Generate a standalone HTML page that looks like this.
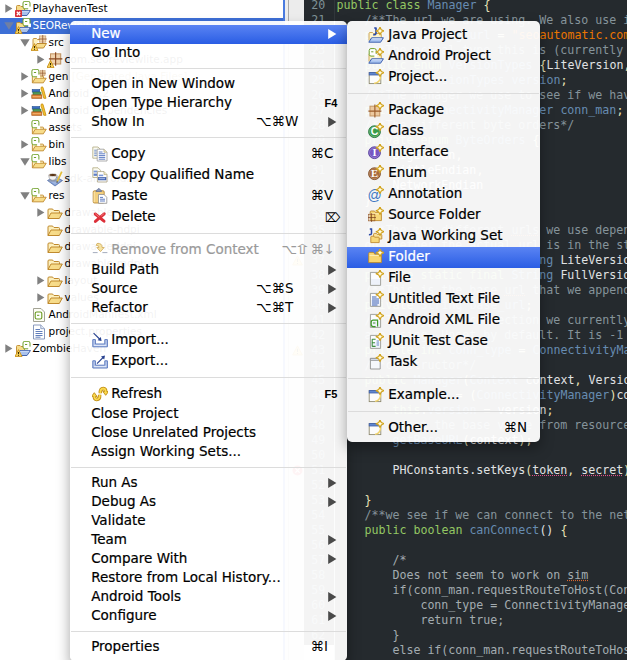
<!DOCTYPE html>
<html><head><meta charset="utf-8"><title>Eclipse context menu</title>
<style>
*{margin:0;padding:0;box-sizing:border-box}
html,body{width:627px;height:660px;overflow:hidden;background:#fff}
body{position:relative;font-family:"DejaVu Sans","Liberation Sans",sans-serif}
#tree{position:absolute;left:0;top:0;width:283px;height:660px;background:#fff;overflow:hidden;font-size:10.5px}
#tree .selrow{position:absolute;left:0;width:283px;height:16px;background:#3d6fd6}
#tree .tw{position:absolute}
#tree .ti{position:absolute;width:16px;height:16px}
#tree .ti svg,.mic svg{display:block}
#tree .tl{position:absolute;line-height:17px;height:17px;white-space:pre;color:#000}
#tree .tl.sel{color:#fff}
.deco{color:#9a8550}
#focus{position:absolute;left:283px;top:0;width:2px;height:660px;background:#4a7be0}
#sash{position:absolute;left:285px;top:0;width:19px;height:660px;background:#ececec}
#sash i{position:absolute;left:3px;top:0;width:1px;height:660px;background:#a9a9a9}
.mk{position:absolute}
#gutter{position:absolute;left:304px;top:0;width:30px;height:645px;background:#252a2e;overflow:hidden}
#gfill{position:absolute;left:304px;top:645px;width:30px;height:15px;background:#f4f4f4}
#gline{position:absolute;left:334px;top:0;width:1px;height:660px;background:#31373b}
#editor{position:absolute;left:335px;top:0;width:292px;height:660px;background:#252a2e;overflow:hidden}
.ln,.cl{position:absolute;font-family:"DejaVu Sans Mono","Liberation Mono",monospace;font-size:11.63px;line-height:15px;height:15px;white-space:pre}
.ln{left:304px;width:21.2px;text-align:right;color:#7e9196}
.cl{left:336.4px;color:#e0e2e4}
.k{color:#93c763}.c{color:#86949b}.m{color:#a3acb0}.t{color:#678cb1}.s{color:#ec7600}.d{color:#e0e2e4}.b{color:#e8e2b7}.f{color:#678cb1}
.sq{text-decoration:underline dotted #d9652e}
.sqr{text-decoration:underline dotted #e0508a}
.menu{position:absolute;background:rgba(255,255,255,0.95);overflow:hidden;font-size:13.5px;color:#000}
#main{left:70px;top:21px;width:277px;height:640px;border-radius:5px;box-shadow:0 8px 14px rgba(0,0,0,0.36)}
#sub{left:347px;top:21px;width:193px;height:421px;border-radius:5px;box-shadow:0 6px 14px rgba(0,0,0,0.35)}
.mi{position:absolute;left:0;right:0;white-space:pre}
.mi.sel{background:linear-gradient(#5a84f3,#2a5de4);color:#fff}
.mi.dis{color:#9a9a9a}
.mt{position:absolute;top:-1px;-webkit-text-stroke:0.2px currentColor}
.mic{position:absolute;left:22px;top:2px;width:16px;height:16px}
#sub .mic{left:21.3px}
.sc{position:absolute;top:-1px}
.sc.fk{font:bold 11px "Liberation Sans",sans-serif;line-height:inherit;top:0}
.sc.del{top:-0.5px;font-size:12.5px;transform:scaleX(0.86);transform-origin:0 50%}
.sc.wide{transform:scaleX(1.6);transform-origin:50% 50%}
.arr{position:absolute;left:258px}
.wl{position:absolute;left:264px;top:0;width:1px;height:660px;background:rgba(255,255,255,0.75)}
.sep{position:absolute;left:1px;right:1px;height:1px;background:#dcdcdc}
</style></head>
<body>
<div id="tree">
<svg class="tw" style="left:5px;top:4px" width="8" height="9" viewBox="0 0 8 9"><path d="M0.3 0.3 L7.4 4.5 L0.3 8.7 Z" fill="#808080"/></svg>
<span class="ti" style="left:15px;top:0.5px"><svg width="16" height="16" viewBox="0 0 16 16"><g transform="translate(0,0)"><path d="M1.5 13 V5.5 Q1.5 4.5 2.5 4.5 H5 L6 5.5 H9.5 V9" fill="#f7dc8a" stroke="#c08a2e" stroke-width="0.9"/><path d="M1.5 14.5 L5 9.5 H15.5 L12 14.5 Z" fill="#a9c1ec" stroke="#4464ad" stroke-width="1" stroke-linejoin="round"/><path d="M5.4 10.3 H14" stroke="#dbe6fa" stroke-width="0.8"/></g><rect x="8" y="0.3" width="7" height="7.5" rx="1.8" fill="#fff" stroke="#6fa02a" stroke-width="1"/><path d="M10 3.5 H12.2" stroke="#6fa02a" stroke-width="1"/><rect x="13.2" y="5.6" width="3" height="3.5" fill="#fff"/><rect x="0" y="9" width="7" height="7" rx="0.8" fill="#d9323a"/><path d="M1.8 10.8 L5.2 14.2 M5.2 10.8 L1.8 14.2" stroke="#fff" stroke-width="1.3"/></svg></span>
<span class="tl" style="left:32.5px;top:0px">PlayhavenTest</span>
<div class="selrow" style="top:18px"></div>
<svg class="tw" style="left:3.5px;top:21.5px" width="10" height="8" viewBox="0 0 10 8"><path d="M0.3 0.3 L9.7 0.3 L5 7.7 Z" fill="#6f7fa3"/></svg>
<span class="ti" style="left:15px;top:17.5px"><svg width="16" height="16" viewBox="0 0 16 16"><g transform="translate(0,0)"><path d="M1.5 13 V5.5 Q1.5 4.5 2.5 4.5 H5 L6 5.5 H9.5 V9" fill="#f7dc8a" stroke="#c08a2e" stroke-width="0.9"/><path d="M1.5 14.5 L5 9.5 H15.5 L12 14.5 Z" fill="#a9c1ec" stroke="#4464ad" stroke-width="1" stroke-linejoin="round"/><path d="M5.4 10.3 H14" stroke="#dbe6fa" stroke-width="0.8"/></g><rect x="8" y="0.3" width="7" height="7.5" rx="1.8" fill="#fff" stroke="#6fa02a" stroke-width="1"/><path d="M10 3.5 H12.2" stroke="#6fa02a" stroke-width="1"/><rect x="13.2" y="5.6" width="3" height="3.5" fill="#fff"/><path d="M3.5 8.6 L7 15.6 H0 Z" fill="#f9d45c" stroke="#c78f1a" stroke-width="0.9" stroke-linejoin="round"/><path d="M3.5 11.0 V13.2 M3.5 14.0 V14.8" stroke="#3a2a00" stroke-width="1.1"/></svg></span>
<span class="tl sel" style="left:32.5px;top:17px">SEOReviewLite</span>
<svg class="tw" style="left:19.5px;top:38.5px" width="10" height="8" viewBox="0 0 10 8"><path d="M0.3 0.3 L9.7 0.3 L5 7.7 Z" fill="#808080"/></svg>
<span class="ti" style="left:31px;top:34.5px"><svg width="16" height="16" viewBox="0 0 16 16"><path d="M2 12 V4.5 Q2 3.5 3 3.5 H5.5 L6.5 4.5 H9" fill="#fdf0bd" stroke="#c08a2e" stroke-width="0.9"/><path d="M3 13 L6 8.5 H15.5 L12.5 13 Z" fill="#f7dc8a" stroke="#c08a2e" stroke-width="1" stroke-linejoin="round"/><g transform="translate(8,0.3) scale(0.62)"><rect x="1" y="1" width="10" height="10" fill="#f0d3ae" stroke="#c39562" stroke-width="1"/><path d="M6 -0.6 V12.6 M-0.6 6 H12.6" stroke="#8a4a22" stroke-width="1.15"/></g><path d="M3.5 8.6 L7 15.6 H0 Z" fill="#f9d45c" stroke="#c78f1a" stroke-width="0.9" stroke-linejoin="round"/><path d="M3.5 11.0 V13.2 M3.5 14.0 V14.8" stroke="#3a2a00" stroke-width="1.1"/></svg></span>
<span class="tl" style="left:48.5px;top:34px">src</span>
<svg class="tw" style="left:37px;top:55px" width="8" height="9" viewBox="0 0 8 9"><path d="M0.3 0.3 L7.4 4.5 L0.3 8.7 Z" fill="#808080"/></svg>
<span class="ti" style="left:47px;top:51.5px"><svg width="16" height="16" viewBox="0 0 16 16"><g transform="translate(2.5,0.8) scale(1.02)"><rect x="1" y="1" width="10" height="10" fill="#f0d3ae" stroke="#c39562" stroke-width="1"/><path d="M6 -0.6 V12.6 M-0.6 6 H12.6" stroke="#8a4a22" stroke-width="1.15"/></g><path d="M3.5 8.6 L7 15.6 H0 Z" fill="#f9d45c" stroke="#c78f1a" stroke-width="0.9" stroke-linejoin="round"/><path d="M3.5 11.0 V13.2 M3.5 14.0 V14.8" stroke="#3a2a00" stroke-width="1.1"/></svg></span>
<span class="tl" style="left:64.5px;top:51px">com.seoreviewlite.app</span>
<svg class="tw" style="left:21px;top:72px" width="8" height="9" viewBox="0 0 8 9"><path d="M0.3 0.3 L7.4 4.5 L0.3 8.7 Z" fill="#808080"/></svg>
<span class="ti" style="left:31px;top:68.5px"><svg width="16" height="16" viewBox="0 0 16 16"><g transform="translate(0.4,2.5) scale(0.97,0.84)"><path d="M1 13.5 V5 Q1 4 2 4 H5 Q6 4 6.5 5 L7 5.5 H11.5 Q12.5 5.5 12.5 6.5 V8" fill="#fdf0bd" stroke="#c08a2e" stroke-width="1"/><path d="M1 13.5 L4 8 H15.3 L12.3 13.5 Z" fill="#f7dc8a" stroke="#c08a2e" stroke-width="1" stroke-linejoin="round"/></g><rect x="0.9" y="0.3" width="7" height="7.5" rx="1.8" fill="#fff" stroke="#6fa02a" stroke-width="1"/><path d="M2.9 3.5 H5.1000000000000005" stroke="#6fa02a" stroke-width="1"/><rect x="6.1000000000000005" y="5.6" width="3" height="3.5" fill="#fff"/><g transform="translate(8.6,1.2) scale(0.5)"><rect x="1" y="1" width="10" height="10" fill="#e8c9a0" stroke="#c39562" stroke-width="1"/><path d="M6 -0.6 V12.6 M-0.6 6 H12.6" stroke="#8a4a22" stroke-width="1.15"/></g></svg></span>
<span class="tl" style="left:48.5px;top:68px">gen <span class="deco">[Generated Java Files]</span></span>
<svg class="tw" style="left:21px;top:89px" width="8" height="9" viewBox="0 0 8 9"><path d="M0.3 0.3 L7.4 4.5 L0.3 8.7 Z" fill="#808080"/></svg>
<span class="ti" style="left:31px;top:85.5px"><svg width="16" height="16" viewBox="0 0 16 16"><rect x="1.2" y="3.5" width="7.5" height="2.6" fill="#3b6fc4" stroke="#27508f" stroke-width="0.6"/><rect x="2" y="6.1" width="8" height="2.8" fill="#4f9a5a" stroke="#2f6e3a" stroke-width="0.6"/><rect x="0.8" y="8.9" width="10" height="3.4" fill="#e0873a" stroke="#a8561a" stroke-width="0.7"/><path d="M1.5 10.6 H10" stroke="#f3b67a" stroke-width="0.8"/><path d="M10.2 1.2 Q11.8 0.2 12.2 2 L15 12.3 H12.8 L11.2 6 L10 3.2 Z" fill="#f5c531" stroke="#c58a0c" stroke-width="0.8" stroke-linejoin="round"/></svg></span>
<span class="tl" style="left:48.5px;top:85px">Android 2.2</span>
<svg class="tw" style="left:21px;top:106px" width="8" height="9" viewBox="0 0 8 9"><path d="M0.3 0.3 L7.4 4.5 L0.3 8.7 Z" fill="#808080"/></svg>
<span class="ti" style="left:31px;top:102.5px"><svg width="16" height="16" viewBox="0 0 16 16"><rect x="1.2" y="3.5" width="7.5" height="2.6" fill="#3b6fc4" stroke="#27508f" stroke-width="0.6"/><rect x="2" y="6.1" width="8" height="2.8" fill="#4f9a5a" stroke="#2f6e3a" stroke-width="0.6"/><rect x="0.8" y="8.9" width="10" height="3.4" fill="#e0873a" stroke="#a8561a" stroke-width="0.7"/><path d="M1.5 10.6 H10" stroke="#f3b67a" stroke-width="0.8"/><path d="M10.2 1.2 Q11.8 0.2 12.2 2 L15 12.3 H12.8 L11.2 6 L10 3.2 Z" fill="#f5c531" stroke="#c58a0c" stroke-width="0.8" stroke-linejoin="round"/></svg></span>
<span class="tl" style="left:48.5px;top:102px">Android Dependencies</span>

<span class="ti" style="left:31px;top:119.5px"><svg width="16" height="16" viewBox="0 0 16 16"><g transform="translate(0.4,2.5) scale(0.97,0.84)"><path d="M1 13.5 V5 Q1 4 2 4 H5 Q6 4 6.5 5 L7 5.5 H11.5 Q12.5 5.5 12.5 6.5 V8" fill="#fdf0bd" stroke="#c08a2e" stroke-width="1"/><path d="M1 13.5 L4 8 H15.3 L12.3 13.5 Z" fill="#f7dc8a" stroke="#c08a2e" stroke-width="1" stroke-linejoin="round"/></g><rect x="0.9" y="0.3" width="7" height="7.5" rx="1.8" fill="#fff" stroke="#6fa02a" stroke-width="1"/><path d="M2.9 3.5 H5.1000000000000005" stroke="#6fa02a" stroke-width="1"/><rect x="6.1000000000000005" y="5.6" width="3" height="3.5" fill="#fff"/></svg></span>
<span class="tl" style="left:48.5px;top:119px">assets</span>
<svg class="tw" style="left:21px;top:140px" width="8" height="9" viewBox="0 0 8 9"><path d="M0.3 0.3 L7.4 4.5 L0.3 8.7 Z" fill="#808080"/></svg>
<span class="ti" style="left:31px;top:136.5px"><svg width="16" height="16" viewBox="0 0 16 16"><g transform="translate(0.4,2.5) scale(0.97,0.84)"><path d="M1 13.5 V5 Q1 4 2 4 H5 Q6 4 6.5 5 L7 5.5 H11.5 Q12.5 5.5 12.5 6.5 V8" fill="#fdf0bd" stroke="#c08a2e" stroke-width="1"/><path d="M1 13.5 L4 8 H15.3 L12.3 13.5 Z" fill="#f7dc8a" stroke="#c08a2e" stroke-width="1" stroke-linejoin="round"/></g><rect x="0.9" y="0.3" width="7" height="7.5" rx="1.8" fill="#fff" stroke="#6fa02a" stroke-width="1"/><path d="M2.9 3.5 H5.1000000000000005" stroke="#6fa02a" stroke-width="1"/><rect x="6.1000000000000005" y="5.6" width="3" height="3.5" fill="#fff"/></svg></span>
<span class="tl" style="left:48.5px;top:136px">bin</span>
<svg class="tw" style="left:19.5px;top:157.5px" width="10" height="8" viewBox="0 0 10 8"><path d="M0.3 0.3 L9.7 0.3 L5 7.7 Z" fill="#808080"/></svg>
<span class="ti" style="left:31px;top:153.5px"><svg width="16" height="16" viewBox="0 0 16 16"><g transform="translate(0.4,2.5) scale(0.97,0.84)"><path d="M1 13.5 V5 Q1 4 2 4 H5 Q6 4 6.5 5 L7 5.5 H11.5 Q12.5 5.5 12.5 6.5 V8" fill="#fdf0bd" stroke="#c08a2e" stroke-width="1"/><path d="M1 13.5 L4 8 H15.3 L12.3 13.5 Z" fill="#f7dc8a" stroke="#c08a2e" stroke-width="1" stroke-linejoin="round"/></g><rect x="0.9" y="0.3" width="7" height="7.5" rx="1.8" fill="#fff" stroke="#6fa02a" stroke-width="1"/><path d="M2.9 3.5 H5.1000000000000005" stroke="#6fa02a" stroke-width="1"/><rect x="6.1000000000000005" y="5.6" width="3" height="3.5" fill="#fff"/></svg></span>
<span class="tl" style="left:48.5px;top:153px">libs</span>

<span class="ti" style="left:47px;top:170.5px"><svg width="16" height="16" viewBox="0 0 16 16"><path d="M0.5 9.5 L8 5.5 L15.5 9.5 L8 15 Z" fill="#7f9bd0" stroke="#4f6aa8" stroke-width="0.7"/><path d="M2 9.6 L8 13.8 L14 9.6 L8 6.6 Z" fill="#9db4e0"/><ellipse cx="5.8" cy="9.3" rx="4.2" ry="1.5" fill="#8e9bb5"/><path d="M1.8 4 Q1.8 9.2 5.8 9.2 Q9.8 9.2 9.8 4 Z" fill="#f4f4f4" stroke="#8a8a8a" stroke-width="0.6"/><ellipse cx="5.8" cy="4" rx="4" ry="1.6" fill="#5a3515" stroke="#e8e8e8" stroke-width="0.8"/><path d="M9.6 5 Q12 4.6 11.4 6.6 Q10.8 8 9 7.6" fill="none" stroke="#b8b8b8" stroke-width="1"/><path d="M14.8 0.6 L10.2 10.6" stroke="#e9c33a" stroke-width="1.7"/><path d="M10.4 10.2 L9.8 11.8" stroke="#555" stroke-width="1.2"/></svg></span>
<span class="tl" style="left:64.5px;top:170px">sdk-android.jar</span>
<svg class="tw" style="left:19.5px;top:191.5px" width="10" height="8" viewBox="0 0 10 8"><path d="M0.3 0.3 L9.7 0.3 L5 7.7 Z" fill="#808080"/></svg>
<span class="ti" style="left:31px;top:187.5px"><svg width="16" height="16" viewBox="0 0 16 16"><g transform="translate(0.4,2.5) scale(0.97,0.84)"><path d="M1 13.5 V5 Q1 4 2 4 H5 Q6 4 6.5 5 L7 5.5 H11.5 Q12.5 5.5 12.5 6.5 V8" fill="#fdf0bd" stroke="#c08a2e" stroke-width="1"/><path d="M1 13.5 L4 8 H15.3 L12.3 13.5 Z" fill="#f7dc8a" stroke="#c08a2e" stroke-width="1" stroke-linejoin="round"/></g><rect x="0.9" y="0.3" width="7" height="7.5" rx="1.8" fill="#fff" stroke="#6fa02a" stroke-width="1"/><path d="M2.9 3.5 H5.1000000000000005" stroke="#6fa02a" stroke-width="1"/><rect x="6.1000000000000005" y="5.6" width="3" height="3.5" fill="#fff"/></svg></span>
<span class="tl" style="left:48.5px;top:187px">res</span>
<svg class="tw" style="left:37px;top:208px" width="8" height="9" viewBox="0 0 8 9"><path d="M0.3 0.3 L7.4 4.5 L0.3 8.7 Z" fill="#808080"/></svg>
<span class="ti" style="left:47px;top:204.5px"><svg width="16" height="16" viewBox="0 0 16 16"><g transform="translate(0,0) scale(1,1)"><path d="M1 13.5 V5 Q1 4 2 4 H5 Q6 4 6.5 5 L7 5.5 H11.5 Q12.5 5.5 12.5 6.5 V8" fill="#fdf0bd" stroke="#c08a2e" stroke-width="1"/><path d="M1 13.5 L4 8 H15.3 L12.3 13.5 Z" fill="#f7dc8a" stroke="#c08a2e" stroke-width="1" stroke-linejoin="round"/></g></svg></span>
<span class="tl" style="left:64.5px;top:204px">drawable</span>

<span class="ti" style="left:47px;top:221.5px"><svg width="16" height="16" viewBox="0 0 16 16"><g transform="translate(0,0) scale(1,1)"><path d="M1 13.5 V5 Q1 4 2 4 H5 Q6 4 6.5 5 L7 5.5 H11.5 Q12.5 5.5 12.5 6.5 V8" fill="#fdf0bd" stroke="#c08a2e" stroke-width="1"/><path d="M1 13.5 L4 8 H15.3 L12.3 13.5 Z" fill="#f7dc8a" stroke="#c08a2e" stroke-width="1" stroke-linejoin="round"/></g></svg></span>
<span class="tl" style="left:64.5px;top:221px">drawable-hdpi</span>

<span class="ti" style="left:47px;top:238.5px"><svg width="16" height="16" viewBox="0 0 16 16"><g transform="translate(0,0) scale(1,1)"><path d="M1 13.5 V5 Q1 4 2 4 H5 Q6 4 6.5 5 L7 5.5 H11.5 Q12.5 5.5 12.5 6.5 V8" fill="#fdf0bd" stroke="#c08a2e" stroke-width="1"/><path d="M1 13.5 L4 8 H15.3 L12.3 13.5 Z" fill="#f7dc8a" stroke="#c08a2e" stroke-width="1" stroke-linejoin="round"/></g></svg></span>
<span class="tl" style="left:64.5px;top:238px">drawable-ldpi</span>

<span class="ti" style="left:47px;top:255.5px"><svg width="16" height="16" viewBox="0 0 16 16"><g transform="translate(0,0) scale(1,1)"><path d="M1 13.5 V5 Q1 4 2 4 H5 Q6 4 6.5 5 L7 5.5 H11.5 Q12.5 5.5 12.5 6.5 V8" fill="#fdf0bd" stroke="#c08a2e" stroke-width="1"/><path d="M1 13.5 L4 8 H15.3 L12.3 13.5 Z" fill="#f7dc8a" stroke="#c08a2e" stroke-width="1" stroke-linejoin="round"/></g></svg></span>
<span class="tl" style="left:64.5px;top:255px">drawable-mdpi</span>
<svg class="tw" style="left:37px;top:276px" width="8" height="9" viewBox="0 0 8 9"><path d="M0.3 0.3 L7.4 4.5 L0.3 8.7 Z" fill="#808080"/></svg>
<span class="ti" style="left:47px;top:272.5px"><svg width="16" height="16" viewBox="0 0 16 16"><g transform="translate(0,0) scale(1,1)"><path d="M1 13.5 V5 Q1 4 2 4 H5 Q6 4 6.5 5 L7 5.5 H11.5 Q12.5 5.5 12.5 6.5 V8" fill="#fdf0bd" stroke="#c08a2e" stroke-width="1"/><path d="M1 13.5 L4 8 H15.3 L12.3 13.5 Z" fill="#f7dc8a" stroke="#c08a2e" stroke-width="1" stroke-linejoin="round"/></g></svg></span>
<span class="tl" style="left:64.5px;top:272px">layout</span>
<svg class="tw" style="left:37px;top:293px" width="8" height="9" viewBox="0 0 8 9"><path d="M0.3 0.3 L7.4 4.5 L0.3 8.7 Z" fill="#808080"/></svg>
<span class="ti" style="left:47px;top:289.5px"><svg width="16" height="16" viewBox="0 0 16 16"><g transform="translate(0,0) scale(1,1)"><path d="M1 13.5 V5 Q1 4 2 4 H5 Q6 4 6.5 5 L7 5.5 H11.5 Q12.5 5.5 12.5 6.5 V8" fill="#fdf0bd" stroke="#c08a2e" stroke-width="1"/><path d="M1 13.5 L4 8 H15.3 L12.3 13.5 Z" fill="#f7dc8a" stroke="#c08a2e" stroke-width="1" stroke-linejoin="round"/></g></svg></span>
<span class="tl" style="left:64.5px;top:289px">values</span>

<span class="ti" style="left:31px;top:306.5px"><svg width="16" height="16" viewBox="0 0 16 16"><path d="M2.5 1.5 H10 L13.5 5 V14.5 H2.5 Z" fill="#fdfdf6" stroke="#9a9a8a" stroke-width="0.9"/><rect x="4.2" y="5" width="6.6" height="7" rx="1.6" fill="#fff" stroke="#6a9a1f" stroke-width="1.1"/><path d="M6 8.3 H8.3" stroke="#6a9a1f" stroke-width="1"/></svg></span>
<span class="tl" style="left:48.5px;top:306px">AndroidManifest.xml</span>

<span class="ti" style="left:31px;top:323.5px"><svg width="16" height="16" viewBox="0 0 16 16"><path d="M2.5 1 H9.8 L13.5 4.7 V15 H2.5 Z" fill="#fff" stroke="#7d8fb5" stroke-width="0.9"/><path d="M9.8 1 V4.7 H13.5" fill="#e4ebf7" stroke="#7d8fb5" stroke-width="0.8"/><path d="M4.5 5.5 H9 M4.5 7.5 H11.5 M4.5 9.5 H11.5 M4.5 11.5 H11.5 M4.5 13.2 H9.5" stroke="#4f6fb3" stroke-width="0.9"/></svg></span>
<span class="tl" style="left:48.5px;top:323px">project.properties</span>
<svg class="tw" style="left:5px;top:344px" width="8" height="9" viewBox="0 0 8 9"><path d="M0.3 0.3 L7.4 4.5 L0.3 8.7 Z" fill="#808080"/></svg>
<span class="ti" style="left:15px;top:340.5px"><svg width="16" height="16" viewBox="0 0 16 16"><g transform="translate(0,0)"><path d="M1.5 13 V5.5 Q1.5 4.5 2.5 4.5 H5 L6 5.5 H9.5 V9" fill="#f7dc8a" stroke="#c08a2e" stroke-width="0.9"/><path d="M1.5 14.5 L5 9.5 H15.5 L12 14.5 Z" fill="#a9c1ec" stroke="#4464ad" stroke-width="1" stroke-linejoin="round"/><path d="M5.4 10.3 H14" stroke="#dbe6fa" stroke-width="0.8"/></g><rect x="8" y="0.3" width="7" height="7.5" rx="1.8" fill="#fff" stroke="#6fa02a" stroke-width="1"/><path d="M10 3.5 H12.2" stroke="#6fa02a" stroke-width="1"/><rect x="13.2" y="5.6" width="3" height="3.5" fill="#fff"/><path d="M3.5 8.6 L7 15.6 H0 Z" fill="#f9d45c" stroke="#c78f1a" stroke-width="0.9" stroke-linejoin="round"/><path d="M3.5 11.0 V13.2 M3.5 14.0 V14.8" stroke="#3a2a00" stroke-width="1.1"/></svg></span>
<span class="tl" style="left:32.5px;top:340px">ZombieHaven</span>
</div>
<div id="focus"></div>
<div id="sash"><i></i></div>
<svg class="mk" style="left:292px;top:255px" width="11" height="11" viewBox="0 0 11 11"><path d="M5.5 0.8 L10.4 10 H0.6 Z" fill="#f9d45c" stroke="#c78f1a" stroke-width="0.9" stroke-linejoin="round"/><path d="M5.5 3.8 V7 M5.5 8 V9" stroke="#3a2a00" stroke-width="1.1"/></svg>
<svg class="mk" style="left:292px;top:345px" width="11" height="11" viewBox="0 0 11 11"><path d="M5.5 0.8 L10.4 10 H0.6 Z" fill="#f9d45c" stroke="#c78f1a" stroke-width="0.9" stroke-linejoin="round"/><path d="M5.5 3.8 V7 M5.5 8 V9" stroke="#3a2a00" stroke-width="1.1"/></svg>
<svg class="mk" style="left:292px;top:465px" width="11" height="11" viewBox="0 0 11 11"><circle cx="5.5" cy="5.5" r="5" fill="#e0343c"/><path d="M3.4 3.4 L7.6 7.6 M7.6 3.4 L3.4 7.6" stroke="#fff" stroke-width="1.3"/></svg>
<div id="gutter"></div>
<div id="gfill"></div>
<div id="gline"></div>
<div id="editor"></div>
<div class="ln" style="top:-2px">20</div>
<div class="cl" style="top:-2px"><span class="k">public class </span><span class="t">Manager</span><span class="b"> {</span></div>
<div class="ln" style="top:13px">21</div>
<div class="cl" style="top:13px"><span class="c">    /**The url we are using. We also use it</span></div>
<div class="ln" style="top:28px">22</div>
<div class="cl" style="top:28px"><span class="d">    </span><span class="k">private </span><span class="t">String </span><span class="f">url</span><span class="b"> = </span><span class="s">"seoautomatic.com"</span></div>
<div class="ln" style="top:43px">23</div>
<div class="cl" style="top:43px"><span class="c">    /**The actual type this is (currently </span></div>
<div class="ln" style="top:58px">24</div>
<div class="cl" style="top:58px"><span class="d">    </span><span class="k">public enum </span><span class="t">VersionTypes </span><span class="b">{</span><span class="d">LiteVersion</span><span class="b">,</span></div>
<div class="ln" style="top:73px">25</div>
<div class="cl" style="top:73px"><span class="d">    </span><span class="k">private </span><span class="t">VersionTypes </span><span class="f">version</span><span class="b">;</span></div>
<div class="ln" style="top:88px">26</div>
<div class="cl" style="top:88px"><span class="c">    /**The manager we use to see if we have</span></div>
<div class="ln" style="top:103px">27</div>
<div class="cl" style="top:103px"><span class="d">    </span><span class="k">private </span><span class="t">ConnectivityManager </span><span class="f">conn_man</span><span class="b">;</span></div>
<div class="ln" style="top:118px">28</div>
<div class="cl" style="top:118px"><span class="c">    /**The different byte orders*/</span></div>
<div class="ln" style="top:133px">29</div>
<div class="cl" style="top:133px"><span class="d">    </span><span class="k">private enum </span><span class="t">ByteOrders </span><span class="b">{</span></div>
<div class="ln" style="top:148px">30</div>
<div class="cl" style="top:148px"><span class="d">        BigEndian</span><span class="b">,</span></div>
<div class="ln" style="top:163px">31</div>
<div class="cl" style="top:163px"><span class="d">        LittleEndian</span><span class="b">,</span></div>
<div class="ln" style="top:178px">32</div>
<div class="cl" style="top:178px"><span class="d">        NetworkEndian</span></div>
<div class="ln" style="top:193px">33</div>
<div class="cl" style="top:193px"><span class="b">    }</span></div>
<div class="ln" style="top:208px">34</div>
<div class="ln" style="top:223px">35</div>
<div class="cl" style="top:223px"><span class="c">    /**The two different </span><span class="c sq">urls</span><span class="c"> we use depend</span></div>
<div class="ln" style="top:238px">36</div>
<div class="cl" style="top:238px"><span class="c">    on whether the actual </span><span class="c sq">url</span><span class="c"> is in the str</span></div>
<div class="ln" style="top:253px">37</div>
<div class="cl" style="top:253px"><span class="d">    </span><span class="k">private static final </span><span class="t">String </span><span class="d">LiteVersion</span></div>
<div class="ln" style="top:268px">38</div>
<div class="cl" style="top:268px"><span class="d">    </span><span class="k">private static final </span><span class="t">String </span><span class="d">FullVersion</span></div>
<div class="ln" style="top:283px">39</div>
<div class="cl" style="top:283px"><span class="c">    /**This is the base </span><span class="c sq">url</span><span class="c"> that we append</span></div>
<div class="ln" style="top:298px">40</div>
<div class="cl" style="top:298px"><span class="d">    </span><span class="k">private </span><span class="t">String </span><span class="f">base_url</span><span class="b">;</span></div>
<div class="ln" style="top:313px">41</div>
<div class="cl" style="top:313px"><span class="c">    /**The type of connection we currently</span></div>
<div class="ln" style="top:328px">42</div>
<div class="cl" style="top:328px"><span class="c">    are using. Unset by default. It is -1 </span></div>
<div class="ln" style="top:343px">43</div>
<div class="cl" style="top:343px"><span class="d">    </span><span class="k">private int </span><span class="f">conn_type</span><span class="b"> = </span><span class="t">ConnectivityMan</span></div>
<div class="ln" style="top:358px">44</div>
<div class="cl" style="top:358px"><span class="c">    /**constructor*/</span></div>
<div class="ln" style="top:373px">45</div>
<div class="cl" style="top:373px"><span class="d">    </span><span class="k">public </span><span class="f">Manager</span><span class="b">(</span><span class="t">Context</span><span class="d"> context</span><span class="b">,</span><span class="d"> Version</span></div>
<div class="ln" style="top:388px">46</div>
<div class="cl" style="top:388px"><span class="d">        </span><span class="f">conn_man</span><span class="b"> = (</span><span class="t">ConnectivityManager</span><span class="b">)</span><span class="d">con</span></div>
<div class="ln" style="top:403px">47</div>
<div class="cl" style="top:403px"><span class="d">        </span><span class="k">this</span><span class="d">.</span><span class="f">version</span><span class="b"> = </span><span class="d">version</span><span class="b">;</span></div>
<div class="ln" style="top:418px">48</div>
<div class="cl" style="top:418px"><span class="c">        //get the base value from resources</span></div>
<div class="ln" style="top:433px">49</div>
<div class="cl" style="top:433px"><span class="d">        </span><span class="f">getBaseURL</span><span class="b">(</span><span class="d">context</span><span class="b">);</span></div>
<div class="ln" style="top:448px">50</div>
<div class="ln" style="top:463px">51</div>
<div class="cl" style="top:463px"><span class="d">        PHConstants.setKeys</span><span class="b">(</span><span class="d sqr">token</span><span class="b">, </span><span class="d sqr">secret</span><span class="b">)</span></div>
<div class="ln" style="top:478px">52</div>
<div class="ln" style="top:493px">53</div>
<div class="cl" style="top:493px"><span class="b">    }</span></div>
<div class="ln" style="top:508px">54</div>
<div class="cl" style="top:508px"><span class="c">    /**we see if we can connect to the netw</span></div>
<div class="ln" style="top:523px">55</div>
<div class="cl" style="top:523px"><span class="d">    </span><span class="k">public boolean </span><span class="f">canConnect</span><span class="d">() </span><span class="b">{</span></div>
<div class="ln" style="top:538px">56</div>
<div class="ln" style="top:553px">57</div>
<div class="cl" style="top:553px"><span class="m">        /*</span></div>
<div class="ln" style="top:568px">58</div>
<div class="cl" style="top:568px"><span class="m">        Does not seem to work on </span><span class="m sq">sim</span></div>
<div class="ln" style="top:583px">59</div>
<div class="cl" style="top:583px"><span class="m">        if(conn_man.requestRouteToHost(Conn</span></div>
<div class="ln" style="top:598px">60</div>
<div class="cl" style="top:598px"><span class="m">            conn_type = ConnectivityManager</span></div>
<div class="ln" style="top:613px">61</div>
<div class="cl" style="top:613px"><span class="m">            return true;</span></div>
<div class="ln" style="top:628px">62</div>
<div class="cl" style="top:628px"><span class="m">        }</span></div>
<div class="cl" style="top:643px"><span class="m">        else if(conn_man.requestRouteToHost</span></div>
<div class="menu" id="main">
<i class="wl"></i>
<div class="mi sel" style="top:4px;height:19px;line-height:19px"><span class="mt" style="left:21.2px">New</span><svg class="arr" style="top:4.0px" width="9" height="10" viewBox="0 0 9 10"><path d="M0.2 0.1 L8.4 5 L0.2 9.9 Z" fill="#fff"/></svg></div>
<div class="mi" style="top:23px;height:19px;line-height:19px"><span class="mt" style="left:21.2px">Go Into</span></div>
<div class="sep" style="top:47px"></div>
<div class="mi" style="top:54px;height:19px;line-height:19px"><span class="mt" style="left:21.2px">Open in New Window</span></div>
<div class="mi" style="top:73px;height:19px;line-height:19px"><span class="mt" style="left:21.2px">Open Type Hierarchy</span><span class="sc fk" style="left:254.5px">F4</span></div>
<div class="mi" style="top:92px;height:19px;line-height:19px"><span class="mt" style="left:21.2px">Show In</span><span class="sc" style="left:186px">⌥⌘W</span><svg class="arr" style="top:4.0px" width="9" height="10" viewBox="0 0 9 10"><path d="M0.2 0.1 L8.4 5 L0.2 9.9 Z" fill="#4a4a4a"/></svg></div>
<div class="sep" style="top:116px"></div>
<div class="mi ic" style="top:123px;height:21px;line-height:21px"><span class="mic"><svg width="16" height="16" viewBox="0 0 16 16"><path d="M0.8 1 H6 L8.2 3.2 V12.2 H0.8 Z" fill="#fbfbf0" stroke="#b0a880" stroke-width="0.8"/><path d="M2.2 4.2 H4.8 M2.2 6 H4.8 M2.2 7.8 H4.8 M2.2 9.6 H4.8" stroke="#5578c0" stroke-width="0.8"/><path d="M5.2 3.2 H12 L15 6.2 V15 H5.2 Z" fill="#fff" stroke="#9a9a9a" stroke-width="0.8"/><path d="M12 3.2 V6.2 H15" fill="#f3e9c0" stroke="#b0a880" stroke-width="0.7"/><path d="M6.8 6 H10.5 M6.8 7.8 H13.2 M6.8 9.6 H13.2 M6.8 11.4 H13.2 M6.8 13.2 H13.2" stroke="#4468b8" stroke-width="0.85"/></svg></span><span class="mt" style="left:41.2px">Copy</span><span class="sc" style="left:240.4px">⌘C</span></div>
<div class="mi ic" style="top:144px;height:21px;line-height:21px"><span class="mic"><svg width="16" height="16" viewBox="0 0 16 16"><path d="M0.8 0.8 H6 L8.5 3.3 V10.5 H0.8 Z" fill="#fbfbf0" stroke="#b0a880" stroke-width="0.8"/><rect x="1.6" y="3.6" width="4" height="1.8" fill="#7a98d8"/><rect x="1.6" y="6.6" width="4" height="2.2" fill="#5a7cc8"/><path d="M5.4 4.6 H12 L15 7.6 V15 H5.4 Z" fill="#fff" stroke="#a8a080" stroke-width="0.8"/><path d="M12 4.6 V7.6 H15" fill="#f3e9c0" stroke="#b0a880" stroke-width="0.7"/><rect x="6.8" y="7.6" width="4.4" height="1.6" fill="#7a98d8"/><rect x="6.4" y="10.4" width="7.6" height="2.6" fill="#4a6cc0" stroke="#2f4f9a" stroke-width="0.5"/><path d="M7.2 11.7 H13" stroke="#c5d4f2" stroke-width="0.8"/></svg></span><span class="mt" style="left:41.2px">Copy Qualified Name</span></div>
<div class="mi ic" style="top:165px;height:21px;line-height:21px"><span class="mic"><svg width="16" height="16" viewBox="0 0 16 16"><rect x="1.2" y="2.8" width="11" height="12.2" rx="1.2" fill="#f3cf7e" stroke="#b88a3a" stroke-width="0.9"/><path d="M2.2 4 V14" stroke="#fbe7b0" stroke-width="1"/><path d="M4 3.5 Q4 1.8 5.5 1.8 Q6 0.5 6.8 0.5 Q7.6 0.5 8.1 1.8 Q9.6 1.8 9.6 3.5 Z" fill="#8a97b8" stroke="#5a688f" stroke-width="0.7"/><path d="M6.5 6.5 H12 L14.8 9.3 V15.3 H6.5 Z" fill="#fff" stroke="#8f8f8f" stroke-width="0.8"/><path d="M8 9.4 H11 M8 11.2 H13 M8 13 H13" stroke="#4468b8" stroke-width="0.85"/></svg></span><span class="mt" style="left:41.2px">Paste</span><span class="sc" style="left:240.4px">⌘V</span></div>
<div class="mi ic" style="top:186px;height:21px;line-height:21px"><span class="mic"><svg width="16" height="16" viewBox="0 0 16 16"><path d="M3.2 5 L12 12.2 M12.2 4.8 L3.4 12.4" fill="none" stroke="#dc2f38" stroke-width="3" stroke-linecap="round"/><path d="M3.4 4.8 L7 7.8 M11.8 4.8 L9.4 6.8" stroke="#f27478" stroke-width="1" stroke-linecap="round"/></svg></span><span class="mt" style="left:41.2px">Delete</span><span class="sc del" style="left:254.5px">⌦</span></div>
<div class="sep" style="top:212px"></div>
<div class="mi dis ic" style="top:219px;height:21px;line-height:21px"><span class="mic"><svg width="16" height="16" viewBox="0 0 16 16"><path d="M5 1.5 Q10.5 1 10 5.5 H12.2 L8.5 9.6 L4.8 5.5 H7 Q7.2 3.2 4.2 3.4 Z" fill="#f6e3a4" stroke="#cfa958" stroke-width="0.8" stroke-linejoin="round"/><path d="M0.8 10.6 H5.6 M10.4 10.6 H15.4" stroke="#9aa3b5" stroke-width="0.9"/></svg></span><span class="mt" style="left:41.2px">Remove from Context</span><span class="sc" style="left:211.4px">⌥</span><span class="sc wide" style="left:227.2px">⇧</span><span class="sc" style="left:240.4px">⌘</span><span class="sc" style="left:253.5px">↓</span></div>
<div class="mi" style="top:240px;height:19px;line-height:19px"><span class="mt" style="left:21.2px">Build Path</span><svg class="arr" style="top:4.0px" width="9" height="10" viewBox="0 0 9 10"><path d="M0.2 0.1 L8.4 5 L0.2 9.9 Z" fill="#4a4a4a"/></svg></div>
<div class="mi" style="top:259px;height:19px;line-height:19px"><span class="mt" style="left:21.2px">Source</span><span class="sc" style="left:186px">⌥⌘S</span><svg class="arr" style="top:4.0px" width="9" height="10" viewBox="0 0 9 10"><path d="M0.2 0.1 L8.4 5 L0.2 9.9 Z" fill="#4a4a4a"/></svg></div>
<div class="mi" style="top:278px;height:19px;line-height:19px"><span class="mt" style="left:21.2px">Refactor</span><span class="sc" style="left:186px">⌥⌘T</span><svg class="arr" style="top:4.0px" width="9" height="10" viewBox="0 0 9 10"><path d="M0.2 0.1 L8.4 5 L0.2 9.9 Z" fill="#4a4a4a"/></svg></div>
<div class="sep" style="top:302px"></div>
<div class="mi ic" style="top:309px;height:21px;line-height:21px"><span class="mic"><svg width="16" height="16" viewBox="0 0 16 16"><path d="M0.8 7.6 H3.4 V12.0 H12.8 V7.6 H15.4 V14.8 H0.8 Z" fill="#b8c8ea" stroke="#5f7cc0" stroke-width="1" stroke-linejoin="round"/><path d="M2 13.399999999999999 H14.2" stroke="#e6edfa" stroke-width="0.9"/><path d="M1.6 1.2 L8.6 8" stroke="#27418f" stroke-width="1.1"/><path d="M9.6 9 L5.6 8.2 L8.8 5 Z" fill="#27418f"/></svg></span><span class="mt" style="left:41.2px">Import...</span></div>
<div class="mi ic" style="top:330px;height:21px;line-height:21px"><span class="mic"><svg width="16" height="16" viewBox="0 0 16 16"><path d="M0.8 7.8 H3.4 V12.2 H12.8 V7.8 H15.4 V15.0 H0.8 Z" fill="#b8c8ea" stroke="#5f7cc0" stroke-width="1" stroke-linejoin="round"/><path d="M2 13.6 H14.2" stroke="#e6edfa" stroke-width="0.9"/><path d="M5 10.6 L11.6 4" stroke="#27418f" stroke-width="1.1"/><path d="M13 2.6 L9 3.4 L12.2 6.6 Z" fill="#27418f"/></svg></span><span class="mt" style="left:41.2px">Export...</span></div>
<div class="sep" style="top:356px"></div>
<div class="mi ic" style="top:363px;height:21px;line-height:21px"><span class="mic"><svg width="16" height="16" viewBox="0 0 16 16"><g transform="rotate(0 8 8) translate(0.7,-0.5)"><path d="M7.6 7.8 Q7.4 3.2 10.6 3 Q13.2 3.2 13 6.4" fill="none" stroke="#bf8c14" stroke-width="3.4" stroke-linecap="butt"/><path d="M10.2 6 H15.8 L13 9.8 Z" fill="#f9d84e" stroke="#bf8c14" stroke-width="0.9" stroke-linejoin="round"/><path d="M7.6 7.6 Q7.4 3.2 10.6 3 Q13.2 3.2 13 6.6" fill="none" stroke="#f9d84e" stroke-width="1.8" stroke-linecap="butt"/></g><g transform="rotate(180 8 8) translate(0.7,-0.5)"><path d="M7.6 7.8 Q7.4 3.2 10.6 3 Q13.2 3.2 13 6.4" fill="none" stroke="#bf8c14" stroke-width="3.4" stroke-linecap="butt"/><path d="M10.2 6 H15.8 L13 9.8 Z" fill="#f9d84e" stroke="#bf8c14" stroke-width="0.9" stroke-linejoin="round"/><path d="M7.6 7.6 Q7.4 3.2 10.6 3 Q13.2 3.2 13 6.6" fill="none" stroke="#f9d84e" stroke-width="1.8" stroke-linecap="butt"/></g></svg></span><span class="mt" style="left:41.2px">Refresh</span><span class="sc fk" style="left:254.5px">F5</span></div>
<div class="mi" style="top:384px;height:19px;line-height:19px"><span class="mt" style="left:21.2px">Close Project</span></div>
<div class="mi" style="top:403px;height:19px;line-height:19px"><span class="mt" style="left:21.2px">Close Unrelated Projects</span></div>
<div class="mi" style="top:422px;height:19px;line-height:19px"><span class="mt" style="left:21.2px">Assign Working Sets...</span></div>
<div class="sep" style="top:446px"></div>
<div class="mi" style="top:453px;height:19px;line-height:19px"><span class="mt" style="left:21.2px">Run As</span><svg class="arr" style="top:4.0px" width="9" height="10" viewBox="0 0 9 10"><path d="M0.2 0.1 L8.4 5 L0.2 9.9 Z" fill="#4a4a4a"/></svg></div>
<div class="mi" style="top:472px;height:19px;line-height:19px"><span class="mt" style="left:21.2px">Debug As</span><svg class="arr" style="top:4.0px" width="9" height="10" viewBox="0 0 9 10"><path d="M0.2 0.1 L8.4 5 L0.2 9.9 Z" fill="#4a4a4a"/></svg></div>
<div class="mi" style="top:491px;height:19px;line-height:19px"><span class="mt" style="left:21.2px">Validate</span></div>
<div class="mi" style="top:510px;height:19px;line-height:19px"><span class="mt" style="left:21.2px">Team</span><svg class="arr" style="top:4.0px" width="9" height="10" viewBox="0 0 9 10"><path d="M0.2 0.1 L8.4 5 L0.2 9.9 Z" fill="#4a4a4a"/></svg></div>
<div class="mi" style="top:529px;height:19px;line-height:19px"><span class="mt" style="left:21.2px">Compare With</span><svg class="arr" style="top:4.0px" width="9" height="10" viewBox="0 0 9 10"><path d="M0.2 0.1 L8.4 5 L0.2 9.9 Z" fill="#4a4a4a"/></svg></div>
<div class="mi" style="top:548px;height:19px;line-height:19px"><span class="mt" style="left:21.2px">Restore from Local History...</span></div>
<div class="mi" style="top:567px;height:19px;line-height:19px"><span class="mt" style="left:21.2px">Android Tools</span><svg class="arr" style="top:4.0px" width="9" height="10" viewBox="0 0 9 10"><path d="M0.2 0.1 L8.4 5 L0.2 9.9 Z" fill="#4a4a4a"/></svg></div>
<div class="mi" style="top:586px;height:19px;line-height:19px"><span class="mt" style="left:21.2px">Configure</span><svg class="arr" style="top:4.0px" width="9" height="10" viewBox="0 0 9 10"><path d="M0.2 0.1 L8.4 5 L0.2 9.9 Z" fill="#4a4a4a"/></svg></div>
<div class="sep" style="top:610px"></div>
<div class="mi" style="top:617px;height:19px;line-height:19px"><span class="mt" style="left:21.2px">Properties</span><span class="sc" style="left:240.4px">⌘I</span></div>
</div>
<div class="menu" id="sub">
<div class="mi ic" style="top:4px;height:21px;line-height:21px"><span class="mic"><svg width="16" height="16" viewBox="0 0 16 16"><path d="M1 13.5 V6.5 Q1 5.5 2 5.5 H4.5 L5.5 6.5 H12.5 Q13.3 6.5 13.3 7.4 V11" fill="#fdf4cc" stroke="#caa04a" stroke-width="0.9"/><path d="M0.8 15.2 L3.6 10.8 H15.4 L12.6 15.2 Z" fill="#a9c4f0" stroke="#3f62b0" stroke-width="1" stroke-linejoin="round"/><path d="M4.2 11.8 H14" stroke="#dfe9fb" stroke-width="0.9"/><path d="M6.2 1 H8.6 M8 1 V6 Q8 8.2 5.2 7.6" fill="none" stroke="#2c4aa6" stroke-width="1.7"/><path d="M12 0.0 L13.25 2.65 L15.9 3.9 L13.25 5.15 L12 7.8 L10.75 5.15 L8.1 3.9 L10.75 2.65 Z" fill="#fff9d0" stroke="#d1a21c" stroke-width="1.15" stroke-linejoin="round"/><circle cx="12" cy="3.9" r="0.9" fill="#fffef0"/></svg></span><span class="mt" style="left:41.2px">Java Project</span></div>
<div class="mi ic" style="top:25px;height:21px;line-height:21px"><span class="mic"><svg width="16" height="16" viewBox="0 0 16 16"><path d="M1 13.5 V6.5 Q1 5.5 2 5.5 H4.5 L5.5 6.5 H12.5 Q13.3 6.5 13.3 7.4 V11" fill="#fdf4cc" stroke="#caa04a" stroke-width="0.9"/><path d="M0.8 15.2 L3.6 10.8 H15.4 L12.6 15.2 Z" fill="#a9c4f0" stroke="#3f62b0" stroke-width="1" stroke-linejoin="round"/><path d="M4.2 11.8 H14" stroke="#dfe9fb" stroke-width="0.9"/><rect x="1.2" y="0.6" width="7" height="7.5" rx="1.8" fill="#fff" stroke="#6fa02a" stroke-width="1"/><path d="M3.2 3.8000000000000003 H5.4" stroke="#6fa02a" stroke-width="1"/><rect x="6.4" y="5.8999999999999995" width="3" height="3.5" fill="#fff"/><path d="M12 0.0 L13.25 2.65 L15.9 3.9 L13.25 5.15 L12 7.8 L10.75 5.15 L8.1 3.9 L10.75 2.65 Z" fill="#fff9d0" stroke="#d1a21c" stroke-width="1.15" stroke-linejoin="round"/><circle cx="12" cy="3.9" r="0.9" fill="#fffef0"/></svg></span><span class="mt" style="left:41.2px">Android Project</span></div>
<div class="mi ic" style="top:46px;height:21px;line-height:21px"><span class="mic"><svg width="16" height="16" viewBox="0 0 16 16"><rect x="1.2" y="3.6" width="11.6" height="11" fill="#fcfcfc" stroke="#8f8a70" stroke-width="0.9"/><rect x="1.2" y="3.6" width="11.6" height="2.4" fill="#5f86d0" stroke="#3f5fa8" stroke-width="0.8"/><path d="M12.6 7 Q12.6 13.4 6 14.4" fill="none" stroke="#f1d36a" stroke-width="1.4"/><path d="M12 -0.19999999999999973 L13.25 2.45 L15.9 3.7 L13.25 4.95 L12 7.6 L10.75 4.95 L8.1 3.7 L10.75 2.45 Z" fill="#fff9d0" stroke="#d1a21c" stroke-width="1.15" stroke-linejoin="round"/><circle cx="12" cy="3.7" r="0.9" fill="#fffef0"/></svg></span><span class="mt" style="left:41.2px">Project...</span></div>
<div class="sep" style="top:72px"></div>
<div class="mi ic" style="top:79px;height:21px;line-height:21px"><span class="mic"><svg width="16" height="16" viewBox="0 0 16 16"><g transform="translate(1,3.2) scale(0.98)"><rect x="1" y="1" width="10" height="10" fill="#ecc9a0" stroke="#c39562" stroke-width="1"/><path d="M6 -0.6 V12.6 M-0.6 6 H12.6" stroke="#9a5b2a" stroke-width="1.15"/></g><path d="M12 -0.19999999999999973 L13.25 2.45 L15.9 3.7 L13.25 4.95 L12 7.6 L10.75 4.95 L8.1 3.7 L10.75 2.45 Z" fill="#fff9d0" stroke="#d1a21c" stroke-width="1.15" stroke-linejoin="round"/><circle cx="12" cy="3.7" r="0.9" fill="#fffef0"/></svg></span><span class="mt" style="left:41.2px">Package</span></div>
<div class="mi ic" style="top:100px;height:21px;line-height:21px"><span class="mic"><svg width="16" height="16" viewBox="0 0 16 16"><circle cx="6.5" cy="8.7" r="5.9" fill="#3a9b4a" stroke="#23733a" stroke-width="0.9"/><circle cx="6.5" cy="8.7" r="5" fill="none" stroke="#fff" stroke-opacity="0.25" stroke-width="0.8"/><text x="2.7" y="12.3" font-family="Liberation Sans,sans-serif" font-weight="bold" font-size="10.5" fill="#fff">C</text><path d="M12 -0.19999999999999973 L13.25 2.45 L15.9 3.7 L13.25 4.95 L12 7.6 L10.75 4.95 L8.1 3.7 L10.75 2.45 Z" fill="#fff9d0" stroke="#d1a21c" stroke-width="1.15" stroke-linejoin="round"/><circle cx="12" cy="3.7" r="0.9" fill="#fffef0"/></svg></span><span class="mt" style="left:41.2px">Class</span></div>
<div class="mi ic" style="top:121px;height:21px;line-height:21px"><span class="mic"><svg width="16" height="16" viewBox="0 0 16 16"><circle cx="6.5" cy="8.7" r="5.9" fill="#7656c2" stroke="#4f3899" stroke-width="0.9"/><circle cx="6.5" cy="8.7" r="5" fill="none" stroke="#fff" stroke-opacity="0.25" stroke-width="0.8"/><text x="4.4" y="12.3" font-family="Liberation Serif,serif" font-weight="bold" font-size="10.5" fill="#fff">I</text><path d="M12 -0.19999999999999973 L13.25 2.45 L15.9 3.7 L13.25 4.95 L12 7.6 L10.75 4.95 L8.1 3.7 L10.75 2.45 Z" fill="#fff9d0" stroke="#d1a21c" stroke-width="1.15" stroke-linejoin="round"/><circle cx="12" cy="3.7" r="0.9" fill="#fffef0"/></svg></span><span class="mt" style="left:41.2px">Interface</span></div>
<div class="mi ic" style="top:142px;height:21px;line-height:21px"><span class="mic"><svg width="16" height="16" viewBox="0 0 16 16"><circle cx="6.5" cy="8.7" r="5.9" fill="#a8693a" stroke="#7a4820" stroke-width="0.9"/><circle cx="6.5" cy="8.7" r="5" fill="none" stroke="#fff" stroke-opacity="0.25" stroke-width="0.8"/><text x="3.0" y="12.3" font-family="Liberation Serif,serif" font-weight="bold" font-size="10.5" fill="#fff">E</text><path d="M12 -0.19999999999999973 L13.25 2.45 L15.9 3.7 L13.25 4.95 L12 7.6 L10.75 4.95 L8.1 3.7 L10.75 2.45 Z" fill="#fff9d0" stroke="#d1a21c" stroke-width="1.15" stroke-linejoin="round"/><circle cx="12" cy="3.7" r="0.9" fill="#fffef0"/></svg></span><span class="mt" style="left:41.2px">Enum</span></div>
<div class="mi ic" style="top:163px;height:21px;line-height:21px"><span class="mic"><svg width="16" height="16" viewBox="0 0 16 16"><text x="-0.6" y="14" font-family="Liberation Sans,sans-serif" font-size="14" fill="#3d77c2">@</text><path d="M12 -0.19999999999999973 L13.25 2.45 L15.9 3.7 L13.25 4.95 L12 7.6 L10.75 4.95 L8.1 3.7 L10.75 2.45 Z" fill="#fff9d0" stroke="#d1a21c" stroke-width="1.15" stroke-linejoin="round"/><circle cx="12" cy="3.7" r="0.9" fill="#fffef0"/></svg></span><span class="mt" style="left:41.2px">Annotation</span></div>
<div class="mi ic" style="top:184px;height:21px;line-height:21px"><span class="mic"><svg width="16" height="16" viewBox="0 0 16 16"><path d="M2.2 13.6 V5 Q2.2 4 3.2 4 H6 Q6.8 4 7.2 4.8 L7.6 5.6 H12.4 Q13.4 5.6 13.4 6.6 V13.6 Z" fill="#f7d878" stroke="#c08a2e" stroke-width="0.9" stroke-linejoin="round"/><path d="M3 6.8 H12.6" stroke="#fdf0b8" stroke-width="1"/><g transform="translate(-0.4,6.6) scale(0.66)"><rect x="1" y="1" width="10" height="10" fill="none" stroke="#9a5b2a" stroke-width="1"/><path d="M6 -0.6 V12.6 M-0.6 6 H12.6" stroke="#7a3f1a" stroke-width="1.15"/></g><path d="M12 -0.19999999999999973 L13.25 2.45 L15.9 3.7 L13.25 4.95 L12 7.6 L10.75 4.95 L8.1 3.7 L10.75 2.45 Z" fill="#fff9d0" stroke="#d1a21c" stroke-width="1.15" stroke-linejoin="round"/><circle cx="12" cy="3.7" r="0.9" fill="#fffef0"/></svg></span><span class="mt" style="left:41.2px">Source Folder</span></div>
<div class="mi ic" style="top:205px;height:21px;line-height:21px"><span class="mic"><svg width="16" height="16" viewBox="0 0 16 16"><path d="M5.6 11 V6.2 Q5.6 5.4 6.4 5.4 H8.4 L9.2 6.4 H13 Q13.8 6.4 13.8 7.2 V11 Z" fill="#f9e29a" stroke="#c08a2e" stroke-width="0.9"/><path d="M2.8 14.6 V9 Q2.8 8.2 3.6 8.2 H5.8 L6.6 9.2 H10.4 Q11.2 9.2 11.2 10 V14.6 Z" fill="#f7d878" stroke="#c08a2e" stroke-width="0.9"/><path d="M1.8 0.9 H4.2 M3.5 0.9 V5.2 Q3.5 7 0.9 6.6" fill="none" stroke="#2c4aa6" stroke-width="1.5"/><path d="M12 -0.19999999999999973 L13.25 2.45 L15.9 3.7 L13.25 4.95 L12 7.6 L10.75 4.95 L8.1 3.7 L10.75 2.45 Z" fill="#fff9d0" stroke="#d1a21c" stroke-width="1.15" stroke-linejoin="round"/><circle cx="12" cy="3.7" r="0.9" fill="#fffef0"/></svg></span><span class="mt" style="left:41.2px">Java Working Set</span></div>
<div class="mi sel ic" style="top:226px;height:21px;line-height:21px"><span class="mic"><svg width="16" height="16" viewBox="0 0 16 16"><path d="M0.7 13.6 V4.4 Q0.7 3.4 1.7 3.4 H5 Q5.8 3.4 6.2 4.2 L6.7 5.2 H12.4 Q13.4 5.2 13.4 6.2 V13.6 Z" fill="#f8d671" stroke="#bd8a28" stroke-width="0.9" stroke-linejoin="round"/><path d="M1.6 6.4 H12.6" stroke="#fdf0b8" stroke-width="1"/><path d="M12 -0.19999999999999973 L13.25 2.45 L15.9 3.7 L13.25 4.95 L12 7.6 L10.75 4.95 L8.1 3.7 L10.75 2.45 Z" fill="#fff9d0" stroke="#d1a21c" stroke-width="1.15" stroke-linejoin="round"/><circle cx="12" cy="3.7" r="0.9" fill="#fffef0"/></svg></span><span class="mt" style="left:41.2px">Folder</span></div>
<div class="mi ic" style="top:247px;height:21px;line-height:21px"><span class="mic"><svg width="16" height="16" viewBox="0 0 16 16"><path d="M2.4 2.4 H9.2 L12.6 5.8 V15.4 H2.4 Z" fill="#eef2fa" stroke="#9b9b93" stroke-width="0.9"/><path d="M3.2 3.2 H8.8 L11.8 6.2 V9 H3.2 Z" fill="#fcfdff"/><path d="M12 -0.19999999999999973 L13.25 2.45 L15.9 3.7 L13.25 4.95 L12 7.6 L10.75 4.95 L8.1 3.7 L10.75 2.45 Z" fill="#fff9d0" stroke="#d1a21c" stroke-width="1.15" stroke-linejoin="round"/><circle cx="12" cy="3.7" r="0.9" fill="#fffef0"/></svg></span><span class="mt" style="left:41.2px">File</span></div>
<div class="mi ic" style="top:268px;height:21px;line-height:21px"><span class="mic"><svg width="16" height="16" viewBox="0 0 16 16"><path d="M2.4 2.4 H9.2 L12.6 5.8 V15.4 H2.4 Z" fill="#eef2fa" stroke="#9b9b93" stroke-width="0.9"/><path d="M3.2 3.2 H8.8 L11.8 6.2 V9 H3.2 Z" fill="#fcfdff"/><path d="M4 6 H8.5 M4 8 H11 M4 10 H11 M4 12 H11 M4 14 H9.5" stroke="#3f63b5" stroke-width="1"/><path d="M12 -0.19999999999999973 L13.25 2.45 L15.9 3.7 L13.25 4.95 L12 7.6 L10.75 4.95 L8.1 3.7 L10.75 2.45 Z" fill="#fff9d0" stroke="#d1a21c" stroke-width="1.15" stroke-linejoin="round"/><circle cx="12" cy="3.7" r="0.9" fill="#fffef0"/></svg></span><span class="mt" style="left:41.2px">Untitled Text File</span></div>
<div class="mi ic" style="top:289px;height:21px;line-height:21px"><span class="mic"><svg width="16" height="16" viewBox="0 0 16 16"><path d="M2.4 2.4 H9.2 L12.6 5.8 V15.4 H2.4 Z" fill="#eef2fa" stroke="#9b9b93" stroke-width="0.9"/><path d="M3.2 3.2 H8.8 L11.8 6.2 V9 H3.2 Z" fill="#fcfdff"/><path d="M9.6 14.6 V8.2 H5.2 Q3.2 8.2 3.2 10.2 V12.6 Q3.2 14.6 5.2 14.6 H7.6" fill="none" stroke="#3f9a2a" stroke-width="1.2"/><path d="M5 11 H7.4" stroke="#3f9a2a" stroke-width="1.1"/><path d="M12 -0.19999999999999973 L13.25 2.45 L15.9 3.7 L13.25 4.95 L12 7.6 L10.75 4.95 L8.1 3.7 L10.75 2.45 Z" fill="#fff9d0" stroke="#d1a21c" stroke-width="1.15" stroke-linejoin="round"/><circle cx="12" cy="3.7" r="0.9" fill="#fffef0"/></svg></span><span class="mt" style="left:41.2px">Android XML File</span></div>
<div class="mi ic" style="top:310px;height:21px;line-height:21px"><span class="mic"><svg width="16" height="16" viewBox="0 0 16 16"><path d="M2.4 2.4 H9.2 L12.6 5.8 V15.4 H2.4 Z" fill="#eef2fa" stroke="#9b9b93" stroke-width="0.9"/><path d="M3.2 3.2 H8.8 L11.8 6.2 V9 H3.2 Z" fill="#fcfdff"/><path d="M4.2 6.2 V13.4 M4.2 6.2 H7.6 M4.2 9.8 H7 M4.2 13.4 H7.6" stroke="#3f8f3f" stroke-width="1.1" fill="none"/><path d="M8.6 8 H11 M8.6 10 H11 M8.6 12 H11" stroke="#5578c0" stroke-width="0.9"/><path d="M12 -0.19999999999999973 L13.25 2.45 L15.9 3.7 L13.25 4.95 L12 7.6 L10.75 4.95 L8.1 3.7 L10.75 2.45 Z" fill="#fff9d0" stroke="#d1a21c" stroke-width="1.15" stroke-linejoin="round"/><circle cx="12" cy="3.7" r="0.9" fill="#fffef0"/></svg></span><span class="mt" style="left:41.2px">JUnit Test Case</span></div>
<div class="mi ic" style="top:331px;height:21px;line-height:21px"><span class="mic"><svg width="16" height="16" viewBox="0 0 16 16"><path d="M2.4 4.4 H12.2 V15 H2.4 Z" fill="#f6f8fc" stroke="#8f8f8f" stroke-width="0.9"/><path d="M2.4 4.4 H12.2 V6.4 H2.4 Z" fill="#d9e0f0" stroke="#8f8f8f" stroke-width="0.8"/><path d="M12 -0.19999999999999973 L13.25 2.45 L15.9 3.7 L13.25 4.95 L12 7.6 L10.75 4.95 L8.1 3.7 L10.75 2.45 Z" fill="#fff9d0" stroke="#d1a21c" stroke-width="1.15" stroke-linejoin="round"/><circle cx="12" cy="3.7" r="0.9" fill="#fffef0"/></svg></span><span class="mt" style="left:41.2px">Task</span></div>
<div class="sep" style="top:357px"></div>
<div class="mi ic" style="top:364px;height:21px;line-height:21px"><span class="mic"><svg width="16" height="16" viewBox="0 0 16 16"><rect x="1.2" y="3.6" width="11.6" height="11" fill="#fcfcfc" stroke="#8f8a70" stroke-width="0.9"/><rect x="1.2" y="3.6" width="11.6" height="2.4" fill="#5f86d0" stroke="#3f5fa8" stroke-width="0.8"/><path d="M12.6 7 Q12.6 13.4 7 14.4" fill="none" stroke="#f1d36a" stroke-width="1.4"/><path d="M12 -0.19999999999999973 L13.25 2.45 L15.9 3.7 L13.25 4.95 L12 7.6 L10.75 4.95 L8.1 3.7 L10.75 2.45 Z" fill="#fff9d0" stroke="#d1a21c" stroke-width="1.15" stroke-linejoin="round"/><circle cx="12" cy="3.7" r="0.9" fill="#fffef0"/></svg></span><span class="mt" style="left:41.2px">Example...</span></div>
<div class="sep" style="top:390px"></div>
<div class="mi ic" style="top:397px;height:21px;line-height:21px"><span class="mic"><svg width="16" height="16" viewBox="0 0 16 16"><rect x="1.2" y="3.6" width="11.6" height="11" fill="#fcfcfc" stroke="#8f8a70" stroke-width="0.9"/><rect x="1.2" y="3.6" width="11.6" height="2.4" fill="#5f86d0" stroke="#3f5fa8" stroke-width="0.8"/><path d="M12.6 7 Q12.6 13.4 7 14.4" fill="none" stroke="#f1d36a" stroke-width="1.4"/><path d="M12 -0.19999999999999973 L13.25 2.45 L15.9 3.7 L13.25 4.95 L12 7.6 L10.75 4.95 L8.1 3.7 L10.75 2.45 Z" fill="#fff9d0" stroke="#d1a21c" stroke-width="1.15" stroke-linejoin="round"/><circle cx="12" cy="3.7" r="0.9" fill="#fffef0"/></svg></span><span class="mt" style="left:41.2px">Other...</span><span class="sc" style="left:156.5px">⌘N</span></div>
</div>
</body></html>
